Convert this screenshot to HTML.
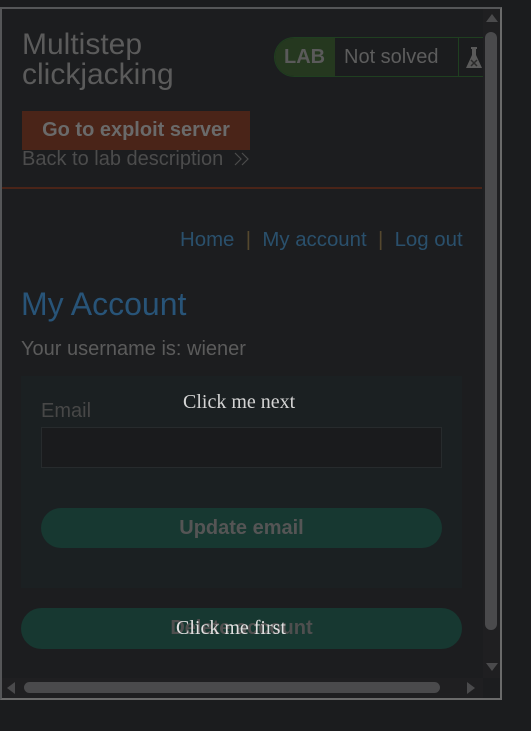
<!DOCTYPE html>
<html><head><meta charset="utf-8"><style>
*{margin:0;padding:0;box-sizing:border-box}
body{width:531px;height:731px;background:#1b1c1e;position:relative;overflow:hidden;font-family:"Liberation Sans",sans-serif}
.a{position:absolute;white-space:nowrap}
#frame{position:absolute;left:0;top:7px;width:502px;height:693px;border:2px solid #555658;border-right-color:#6a6a6a;border-bottom-color:#6a6a6a;background:#1c1d1f;overflow:hidden}
.g{color:#5b5b5b}
</style></head><body>
<div id="frame"></div>
<div class="a g" style="left:22px;top:30px;font-size:30px;line-height:30px">Multistep<br>clickjacking</div>
<div class="a" style="left:274px;top:37px;width:209px;height:40px;border:1px solid #1f3f20;border-right:none;border-radius:20px 0 0 20px;background:#1b1c1e;overflow:hidden">
 <div class="a" style="left:0;top:0;width:60px;height:38px;background:#25381f;color:#5a5a5a;font-weight:bold;font-size:20px;line-height:38px;padding-left:9px">LAB</div>
 <div class="a" style="left:69px;top:0;font-size:20px;line-height:38px;color:#5d5d5d">Not solved</div>
 <div class="a" style="left:183px;top:0;width:1px;height:38px;background:#1f3f20"></div>
 <svg class="a" style="left:190px;top:8px" width="18" height="24" viewBox="0 0 18 24"><path d="M6 1h6v2h-1v6l6 13H1L7 9V3H6z" fill="#5a5a5a"/><path d="M6 14l6 6M12 14l-6 6" stroke="#2a2a2a" stroke-width="1.5"/></svg>
</div>
<div class="a" style="left:22px;top:111px;width:228px;height:39px;background:#4a2418;color:#6a6a6a;font-weight:bold;font-size:20px;line-height:39px;text-align:center">Go to exploit server</div>
<div class="a" style="left:22px;top:148px;font-size:20px;line-height:22px;color:#4c4c4c">Back to lab description</div>
<svg class="a" style="left:234px;top:152px" width="15" height="14" viewBox="0 0 15 14"><path d="M1 1l6 6-6 6M8 1l6 6-6 6" fill="none" stroke="#4c4c4c" stroke-width="1.2"/></svg>
<div class="a" style="left:2px;top:187px;width:480px;height:2px;background:#4a2418"></div>
<div class="a" style="left:180px;top:229px;font-size:20.4px;line-height:22px;color:#2a506c">Home&nbsp;&nbsp;<span style="color:#55482e">|</span>&nbsp;&nbsp;My account&nbsp;&nbsp;<span style="color:#55482e">|</span>&nbsp;&nbsp;Log out</div>
<div class="a" style="left:21px;top:286px;font-size:32px;line-height:36px;color:#285478">My Account</div>
<div class="a g" style="left:21px;top:338px;font-size:20px;line-height:22px">Your username is: wiener</div>
<div class="a" style="left:21px;top:376px;width:441px;height:212px;background:#1b2022"></div>
<div class="a" style="left:41px;top:400px;font-size:20px;line-height:22px;color:#474747">Email</div>
<div class="a" style="left:41px;top:427px;width:401px;height:41px;background:#1a1b1d;border:1px solid #272b2d"></div>
<div class="a" style="left:41px;top:508px;width:401px;height:40px;border-radius:20px;background:#173831;color:#555;font-weight:bold;font-size:20px;line-height:40px;text-align:center">Update email</div>
<div class="a" style="left:21px;top:608px;width:441px;height:41px;border-radius:21px;background:#173831;color:#4f4f4f;font-weight:bold;font-size:20px;line-height:41px;text-align:center">Delete account</div>
<div class="a" style="left:183px;top:391px;font-family:'Liberation Serif',serif;font-size:20px;line-height:22px;color:#d4d4d4">Click me next</div>
<div class="a" style="left:176px;top:617px;font-family:'Liberation Serif',serif;font-size:20px;line-height:22px;color:#e0e0e0">Click me first</div>
<div class="a" style="left:483px;top:9px;width:17px;height:669px;background:#1f1f21"></div>
<div class="a" style="left:485px;top:32px;width:12px;height:598px;border-radius:6px;background:#4a4a4c"></div>
<div class="a" style="left:486px;top:14px;width:0;height:0;border-left:6px solid transparent;border-right:6px solid transparent;border-bottom:8px solid #4a4a4c"></div>
<div class="a" style="left:486px;top:663px;width:0;height:0;border-left:6px solid transparent;border-right:6px solid transparent;border-top:8px solid #4a4a4c"></div>
<div class="a" style="left:2px;top:678px;width:481px;height:20px;background:#1f1f21"></div>
<div class="a" style="left:24px;top:682px;width:416px;height:11px;border-radius:6px;background:#4a4a4c"></div>
<div class="a" style="left:7px;top:682px;width:0;height:0;border-top:6px solid transparent;border-bottom:6px solid transparent;border-right:8px solid #4a4a4c"></div>
<div class="a" style="left:467px;top:682px;width:0;height:0;border-top:6px solid transparent;border-bottom:6px solid transparent;border-left:8px solid #4a4a4c"></div>
</body></html>
